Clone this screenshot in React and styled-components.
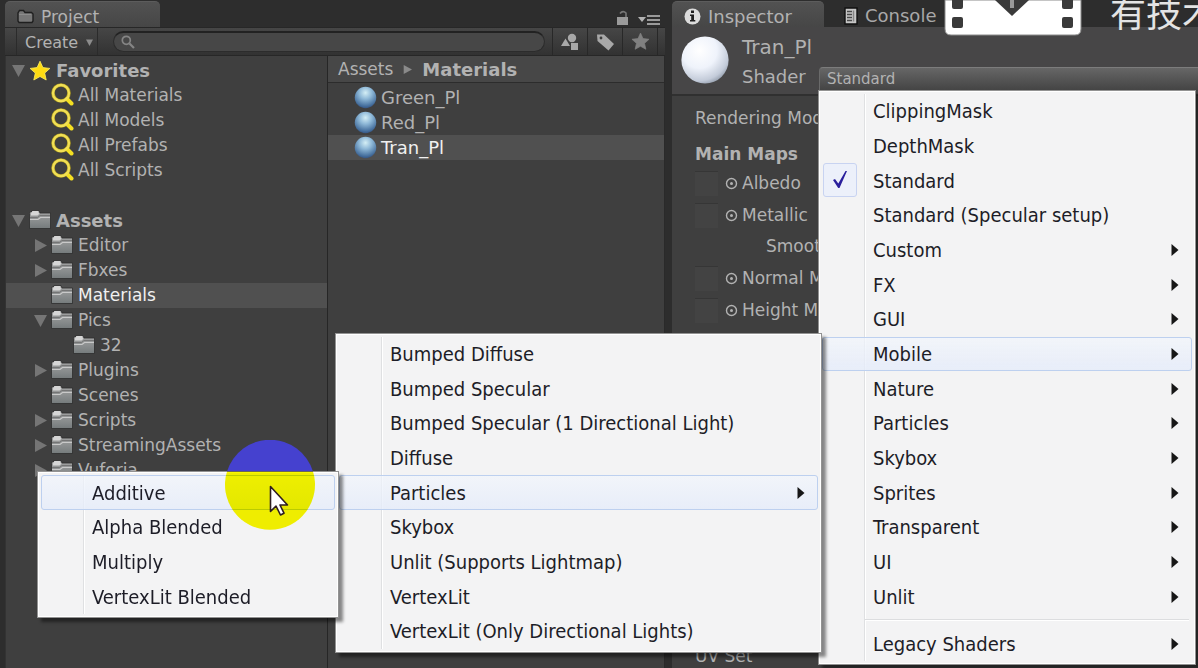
import React from "react";
import styled, { createGlobalStyle, css } from "styled-components";

const Global = createGlobalStyle`
  *, *::before, *::after { box-sizing: border-box; }
  body { margin: 0; background: #2d2d2d; }
  button, input { font: inherit; color: inherit; margin: 0; padding: 0; border: 0; background: none; text-align: left; }
  ul { list-style: none; margin: 0; padding: 0; }
  svg { display: block; flex: none; }
`;

const uiFont = `"DejaVu Sans", Verdana, sans-serif`;
const menuFont = `"DejaVu Sans Condensed", "Segoe UI", sans-serif`;

/* ---------- shell ---------- */
const Editor = styled.div`
  display: grid;
  grid-template-columns: minmax(0, 660fr) minmax(0, 526fr);
  gap: 7px;
  padding-left: 5px;
  min-height: 100vh;
  position: relative;
  overflow: hidden;
  background: #2d2d2d;
  color: #b2b2b2;
  font: 17px/25px ${uiFont};
`;
const Panel = styled.section`
  display: flex;
  flex-direction: column;
  min-width: 0;
`;
const TabBar = styled.div`
  display: flex;
  align-items: stretch;
  height: 27px;
  padding-top: 1px;
`;
const Tab = styled.button`
  display: flex;
  align-items: center;
  gap: 7px;
  width: ${(p) => p.$width}px;
  padding: 4px 0 0 ${(p) => (p.$active ? 12 : 20)}px;
  font-size: ${(p) => (p.$large ? 18 : 17)}px;
  line-height: 20px;
  color: #a8a8a8;
  white-space: nowrap;
  ${(p) =>
    p.$active &&
    css`
      background: linear-gradient(#525252, #464646);
      border-top: 1px solid #5c5c5c;
      border-radius: 5px 5px 0 0;
      color: #b2b2b2;
    `}
`;
const PanelTools = styled.div`
  display: flex;
  align-items: flex-end;
  gap: 8px;
  margin-left: auto;
  padding: 0 4px 1px 0;
`;
const IconButton = styled.button`
  display: flex;
`;

/* ---------- project panel ---------- */
const Toolbar = styled.div`
  display: flex;
  align-items: stretch;
  height: 29px;
  padding-left: 11px;
  background: linear-gradient(#464646, #323232);
  border-top: 1px solid #272727;
  border-bottom: 1px solid #272727;
`;
const CreateButton = styled.button`
  display: flex;
  align-items: center;
  justify-content: space-between;
  width: 82px;
  padding: 2px 4px 0 8px;
  border: solid #2b2b2b;
  border-width: 0 1px;
  font-size: 16px;
`;
const SearchField = styled.label`
  display: flex;
  align-items: center;
  flex: 1;
  min-width: 0;
  margin: 3px 7px 3px 15px;
  padding-left: 7px;
  border-radius: 11px;
  background: #474747;
  border: 1px solid #2c2c2c;
  border-top: 2px solid #222;
  input { flex: 1; min-width: 0; padding-left: 8px; font-size: 15px; outline: 0; }
`;
const FilterButton = styled.button`
  display: flex;
  align-items: center;
  justify-content: center;
  width: 35px;
  border-left: 1px solid #282828;
`;
const ToolbarEnd = styled.span`
  width: 8px;
  border-left: 1px solid #282828;
`;
const Columns = styled.div`
  display: grid;
  grid-template-columns: minmax(0, 323fr) minmax(0, 337fr);
  flex: 1;
  background: #3f3f3f;
`;
const Tree = styled.ul`
  padding-top: 2px;
  border-right: 1px solid #262626;
  border-left: 1px solid #333;
`;
const TreeRow = styled.li`
  display: flex;
  align-items: center;
  height: 25px;
  padding-left: ${(p) => 6 + p.$level * 22}px;
  font-size: ${(p) => (p.$level === 0 ? 18 : 17)}px;
  font-weight: ${(p) => (p.$level === 0 ? 700 : 400)};
  white-space: nowrap;
  ${(p) => p.$selected && css`background: #505050; color: #f0f0f0;`}
`;
const TreeGap = styled.li`
  height: 25px;
`;
const Fold = styled.button`
  width: 17px;
  height: 15px;
`;
const TreeIcon = styled.span`
  width: 27px;
`;
const Listing = styled.div`
  border-right: 1px solid #2a2a2a;
`;
const Breadcrumb = styled.nav`
  display: flex;
  align-items: center;
  gap: 10px;
  height: 27px;
  padding-left: 10px;
  background: #474747;
  border-bottom: 1px solid #2c2c2c;
  margin-bottom: 2px;
  a { color: inherit; text-decoration: none; }
  b { font-size: 18px; }
`;
const AssetRow = styled.li`
  display: flex;
  align-items: center;
  gap: 4px;
  height: 25px;
  padding-left: 26px;
  font-size: 18px;
  ${(p) => p.$selected && css`background: #505050; color: #f0f0f0;`}
`;

/* ---------- inspector ---------- */
const MaterialHeader = styled.div`
  display: flex;
  align-items: flex-start;
  height: 69px;
  padding-left: 9px;
  background: #474647;
  border-bottom: 2px solid #303030;
  > svg { margin-top: 9px; }
`;
const MaterialInfo = styled.div`
  flex: 1;
  min-width: 0;
  padding: 6px 0 0 13px;
`;
const MaterialName = styled.div`
  font-size: 20px;
  line-height: 28px;
`;
const ShaderLine = styled.div`
  display: flex;
  height: 24px;
  margin-top: 5px;
`;
const ShaderLabel = styled.span`
  width: 77px;
  font-size: 18px;
  line-height: 22px;
`;
const ShaderPicker = styled.div`
  position: relative;
  flex: 1;
`;
const ShaderButton = styled.button`
  width: 100%;
  height: 24px;
  padding-left: 7px;
  border-top: 1px solid #7c7c7c;
  border-left: 1px solid #6a6a6a;
  border-radius: 4px 0 0 0;
  background: linear-gradient(#666, #434343);
  font-size: 15px;
  line-height: 19px;
`;
const Properties = styled.div`
  display: flex;
  flex-direction: column;
  flex: 1;
  padding: 10px 0 0 23px;
  background: #3f3f3f;
  white-space: nowrap;
`;
const PropertyLabel = styled.div`
  height: ${(p) => (p.$heading ? 35 : 27)}px;
  line-height: ${(p) => (p.$heading ? 43 : 25)}px;
  font-weight: ${(p) => (p.$heading ? 700 : 400)};
`;
const MapList = styled.ul`
  display: grid;
  grid-auto-rows: 1fr;
  min-height: 158px;
`;
const MapRow = styled.li`
  display: flex;
  align-items: center;
  gap: 4px;
  padding-left: ${(p) => (p.$indent ? 71 : 0)}px;
`;
const TextureSlot = styled.button`
  width: 23px;
  height: 25px;
  margin-right: 3px;
  background: #434343;
  border-top: 1px solid #363636;
`;
const Footer = styled.div`
  margin-top: auto;
  line-height: 23px;
`;

/* ---------- popup menus ---------- */
const Menu = styled.div`
  position: absolute;
  z-index: 2;
  width: ${(p) => p.$width}px;
  padding: 3px;
  border: 1px solid #929292;
  background:
    linear-gradient(90deg, transparent 42px, #dfe0e2 42px, #dfe0e2 43px, #fff 43px, #fff 44px, transparent 44px) content-box,
    #f3f3f4;
  box-shadow: inset 0 0 0 1px #fff, 4px 4px 3px rgba(0, 0, 0, 0.45);
  color: #1d1d27;
  font: 20px/32px ${menuFont};
  ${(p) => (p.$root ? "top: 100%; left: -1px;" : "top: -4px; right: 100%;")}
`;
const MenuGroup = styled.ul`
  display: grid;
  grid-auto-rows: 1fr;
  min-height: ${(p) => p.$height}px;
`;
const MenuItem = styled.li`
  position: relative;
  display: flex;
`;
const MenuButton = styled.button`
  display: flex;
  align-items: center;
  flex: 1;
  padding: 0 12px 0 50px;
  border: 1px solid transparent;
  border-radius: 3px;
  white-space: nowrap;
  ${(p) =>
    p.$active &&
    css`
      border-color: #bdd0ef;
      background: linear-gradient(rgba(241, 245, 252, 0.7), rgba(229, 236, 250, 0.8));
    `}
  svg { margin-left: auto; }
`;
const CheckBadge = styled.span`
  position: absolute;
  left: 1px;
  top: 0;
  display: flex;
  align-items: center;
  justify-content: center;
  width: 34px;
  height: 34px;
  border: 1px solid #c8d3f1;
  border-radius: 3px;
  background: #ecf0fa;
`;
const Separator = styled.hr`
  height: 2px;
  margin: 5px 3px 5px 43px;
  border: 0;
  border-top: 1px solid #dcdddf;
  background: #fff;
`;
const ClickHalo = styled.svg`
  position: absolute;
  left: 184px;
  top: -35px;
  pointer-events: none;
  mix-blend-mode: ${(p) => (p.$blend ? "multiply" : "normal")};
`;
const Pointer = styled.svg`
  position: absolute;
  left: 228px;
  top: 10px;
`;

/* ---------- video overlay ---------- */
const Watermark = styled.div`
  position: absolute;
  top: 0;
  left: 944px;
  display: flex;
  gap: 28px;
  color: #e4e4e4;
  font: 36px/34px "Noto Sans CJK SC", sans-serif;
  white-space: nowrap;
  span { margin-top: -6px; }
`;

/* ---------- drawings ---------- */
const Arrow = ({ down, size = 13, fill = "#757575" }) => (
  <svg width={size} height={size} viewBox="0 0 13 13">
    <path d={down ? "M0 1h13L6.500 13z" : "M1 0v13L13 6.500z"} fill={fill} />
  </svg>
);
const FolderIcon = () => (
  <svg width="22" height="21" viewBox="0 0 22 21">
    <defs>
      <linearGradient id="folder" x1="0" y1="0" x2="0" y2="1">
        <stop offset="0" stopColor="#a6a6a6" />
        <stop offset="1" stopColor="#757b7c" />
      </linearGradient>
    </defs>
    <path d="M.5 3.500Q.5 1.500 2 1.500H3V.5h7l1 2.500h10.500v15.500H.5z" fill="url(#folder)" stroke="#2c2c2c" strokeWidth=".8" />
    <path d="M2 3.500L3.500 1H9l1.200 3-1.700 1.500H2z" fill="#d6d6d6" />
    <path d="M1 9.500h8l2.500-2h9.500" fill="none" stroke="#c9c9c9" strokeWidth="1.200" />
    <path d="M1 7.500h7.500l2.500-2h10" fill="none" stroke="#6c6c6c" strokeWidth=".8" />
  </svg>
);
const StarIcon = ({ size = 22, fill = "#ffdc12", edge = "#ffef60" }) => (
  <svg width={size} height={size} viewBox="0 0 22 22">
    <path d="M11 1.200l2.900 6.400 7 .8-5.200 4.700 1.500 6.900L11 16.500 4.800 20l1.500-6.900L1.100 8.400l7-.8z" fill={fill} stroke={edge} strokeWidth=".8" />
  </svg>
);
const YellowSearch = () => (
  <svg width="23" height="25" viewBox="0 0 23 25" fill="none" strokeLinecap="round">
    <circle cx="10" cy="10" r="8" stroke="#a89620" strokeWidth="3.600" />
    <path d="M16 16l4.500 4.500" stroke="#f4df22" strokeWidth="4" />
    <circle cx="10" cy="10" r="8" stroke="#f1df55" strokeWidth="2.400" />
  </svg>
);
const SmallSearch = () => (
  <svg width="14" height="14" viewBox="0 0 14 14" fill="none" stroke="#858585" strokeWidth="1.700">
    <circle cx="5.300" cy="5.300" r="4" />
    <path d="M8.500 8.500L13 13" strokeWidth="2.200" />
  </svg>
);
const Sphere = ({ size, white }) => (
  <svg width={size} height={size} viewBox="0 0 24 24">
    <defs>
      <radialGradient id={white ? "ballW" : "ballB"} cx={white ? ".38" : ".5"} cy={white ? ".3" : ".28"} r={white ? ".75" : ".72"}>
        <stop offset="0" stopColor={white ? "#ffffff" : "#d4eef5"} />
        <stop offset={white ? ".5" : ".4"} stopColor={white ? "#eff3fb" : "#8fb9d8"} />
        <stop offset=".85" stopColor={white ? "#c3cbd9" : "#47719f"} />
        <stop offset="1" stopColor={white ? "#929cab" : "#355583"} />
      </radialGradient>
    </defs>
    <circle cx="12" cy="12" r={white ? 11.800 : 11.200} fill={`url(#${white ? "ballW" : "ballB"})`} />
  </svg>
);
const TabFolder = () => (
  <svg width="17" height="15" viewBox="0 0 17 15">
    <path d="M1 12V4l1.500-2.500h4L8 3.500h6.500L16 5v7l-1 1.500H2z" fill="#777" stroke="#1f1f1f" strokeWidth="1.400" />
    <path d="M2 5.500h12" stroke="#929292" strokeWidth=".8" />
  </svg>
);
const LockIcon = () => (
  <svg width="14" height="16" viewBox="0 0 14 16">
    <rect x="1" y="7" width="11" height="8" fill="#9a9a9a" />
    <path d="M4 3.500Q7 0 10 3v4" fill="none" stroke="#777" strokeWidth="1.600" />
  </svg>
);
const OptionsIcon = () => (
  <svg width="23" height="12" viewBox="0 0 23 12">
    <path d="M0 3h8L4 8z" fill="#b2b2b2" />
    <path d="M9 2h13M9 6h13M9 10h13" stroke="#9a9a9a" strokeWidth="2.200" />
  </svg>
);
const ShapesIcon = () => (
  <svg width="18" height="18" viewBox="0 0 18 18" fill="#a8a8a8">
    <circle cx="11" cy="5" r="4.200" />
    <path d="M0 13L4.500 5.500 9 13z" />
    <path d="M10 10h7v7h-7z" />
  </svg>
);
const TagIcon = () => (
  <svg width="19" height="18" viewBox="0 0 19 18">
    <path d="M1 1.500h7l10 9.500-5.500 6.500L1.500 8z" fill="#a8a8a8" />
    <circle cx="5" cy="5" r="1.400" fill="#3c3c3c" />
  </svg>
);
const InfoIcon = () => (
  <svg width="17" height="17" viewBox="0 0 17 17">
    <circle cx="8.500" cy="8.500" r="8" fill="#dcdcdc" />
    <path d="M7 2.500h3v2.400H7zM6 6.500h4V12h1.300v1.600H6V12h1.200V8H6z" fill="#1e1e1e" />
  </svg>
);
const ConsoleIcon = () => (
  <svg width="14" height="18" viewBox="0 0 14 18">
    <path d="M1 1h12v16H1z" fill="#c6c6c6" stroke="#111" strokeWidth="1.400" />
    <path d="M3 4.500h5M3 7.500h5M3 10.500h5M3 13.500h5" stroke="#4a4a4a" strokeWidth="1.300" />
    <path d="M9.500 3.500v11" stroke="#858585" strokeWidth="1.500" />
  </svg>
);
const PickerIcon = () => (
  <svg width="13" height="13" viewBox="0 0 13 13">
    <circle cx="6.500" cy="6.500" r="5" fill="none" stroke="#b2b2b2" strokeWidth="1.400" />
    <circle cx="6.500" cy="6.500" r="1.500" fill="#b2b2b2" />
  </svg>
);
const CheckIcon = () => (
  <svg width="18" height="20" viewBox="0 0 18 20">
    <path d="M2 10l2-1 3.300 4.500L14.500 1l1.500 0L8.500 18H7.200z" fill="#2a1f9c" />
  </svg>
);
const SubArrow = () => (
  <svg width="8" height="12" viewBox="0 0 8 12">
    <path d="M0.500 0v12L7.500 6z" fill="#161616" />
  </svg>
);
const FilmIcon = () => (
  <svg width="138" height="36" viewBox="0 0 138 36">
    <path d="M1 0h136v29q0 6-6 6H7q-6 0-6-6z" fill="#fff" stroke="#8b8b8b" />
    <g fill="#3a3a3a">
      <rect x="8" y="-3" width="11" height="12" rx="2" />
      <rect x="8" y="17" width="11" height="11" rx="2" />
      <rect x="118" y="-3" width="11" height="12" rx="2" />
      <rect x="118" y="17" width="11" height="11" rx="2" />
      <path d="M51 0h34L68 16z" />
    </g>
    <path d="M68 0v8" stroke="#999" strokeWidth="4" />
  </svg>
);

/* ---------- content ---------- */
const favorites = ["All Materials", "All Models", "All Prefabs", "All Scripts"];
const folders = [
  { name: "Assets", level: 0, fold: "open" },
  { name: "Editor", level: 1, fold: "closed" },
  { name: "Fbxes", level: 1, fold: "closed" },
  { name: "Materials", level: 1, selected: true },
  { name: "Pics", level: 1, fold: "open" },
  { name: "32", level: 2 },
  { name: "Plugins", level: 1, fold: "closed" },
  { name: "Scenes", level: 1 },
  { name: "Scripts", level: 1, fold: "closed" },
  { name: "StreamingAssets", level: 1, fold: "closed" },
  { name: "Vuforia", level: 1, fold: "closed" },
];
const materials = ["Green_Pl", "Red_Pl", "Tran_Pl"];
const maps = ["Albedo", "Metallic", "Smoothness", "Normal Map", "Height Map"];
const particleShaders = [
  { name: "Additive", active: true, pointer: true },
  { name: "Alpha Blended" },
  { name: "Multiply" },
  { name: "VertexLit Blended" },
];
const mobileShaders = [
  { name: "Bumped Diffuse" },
  { name: "Bumped Specular" },
  { name: "Bumped Specular (1 Directional Light)" },
  { name: "Diffuse" },
  { name: "Particles", more: true, active: true, submenu: { items: particleShaders, width: 302, height: 139 } },
  { name: "Skybox" },
  { name: "Unlit (Supports Lightmap)" },
  { name: "VertexLit" },
  { name: "VertexLit (Only Directional Lights)" },
];
const shaders = [
  { name: "ClippingMask" },
  { name: "DepthMask" },
  { name: "Standard", checked: true },
  { name: "Standard (Specular setup)" },
  { name: "Custom", more: true },
  { name: "FX", more: true },
  { name: "GUI", more: true },
  { name: "Mobile", more: true, active: true, submenu: { items: mobileShaders, width: 487, height: 312 } },
  { name: "Nature", more: true },
  { name: "Particles", more: true },
  { name: "Skybox", more: true },
  { name: "Sprites", more: true },
  { name: "Transparent", more: true },
  { name: "UI", more: true },
  { name: "Unlit", more: true },
];

function MenuItems({ items, height }) {
  return (
    <MenuGroup $height={height}>
      {items.map((item) => (
        <MenuItem key={item.name}>
          <MenuButton $active={item.active}>
            {item.name}
            {item.more && <SubArrow />}
          </MenuButton>
          {item.checked && <CheckBadge><CheckIcon /></CheckBadge>}
          {item.submenu && (
            <Menu $width={item.submenu.width}>
              <MenuItems items={item.submenu.items} height={item.submenu.height} />
            </Menu>
          )}
          {item.pointer && <ClickPointer />}
        </MenuItem>
      ))}
    </MenuGroup>
  );
}

function ClickPointer() {
  return (
    <>
      <ClickHalo width="90" height="91" viewBox="0 0 90 91">
        <path d="M2 31.500A45 45 0 0 1 88 31.500z" fill="#4541cf" />
      </ClickHalo>
      <ClickHalo $blend width="90" height="91" viewBox="0 0 90 91">
        <path d="M2 31.500A45 45 0 1 0 88 31.500z" fill="#fbf900" />
      </ClickHalo>
      <Pointer width="20" height="32" viewBox="0 0 20 32">
        <path d="M1.500 1.500v25l5.500-5.500 4.500 9 3.500-1.800-4-8.200h7.500z" fill="#fff" stroke="#2e1e20" strokeWidth="1.600" strokeLinejoin="round" />
      </Pointer>
    </>
  );
}

function ProjectPanel() {
  return (
    <Panel>
      <TabBar>
        <Tab $active $width={155}><TabFolder />Project</Tab>
        <PanelTools>
          <IconButton aria-label="Lock"><LockIcon /></IconButton>
          <IconButton aria-label="Options"><OptionsIcon /></IconButton>
        </PanelTools>
      </TabBar>
      <Toolbar>
        <CreateButton>Create<Arrow down size={7} fill="#8c8c8c" /></CreateButton>
        <SearchField>
          <SmallSearch />
          <input type="text" aria-label="Search assets" />
        </SearchField>
        <FilterButton aria-label="Filter by type"><ShapesIcon /></FilterButton>
        <FilterButton aria-label="Filter by label"><TagIcon /></FilterButton>
        <FilterButton aria-label="Save search"><StarIcon size={19} fill="#808080" edge="#808080" /></FilterButton>
        <ToolbarEnd />
      </Toolbar>
      <Columns>
        <Tree>
          <TreeRow $level={0}>
            <Fold aria-label="Collapse Favorites"><Arrow down /></Fold>
            <TreeIcon><StarIcon /></TreeIcon>Favorites
          </TreeRow>
          {favorites.map((name) => (
            <TreeRow key={name} $level={1}>
              <Fold as="span" />
              <TreeIcon><YellowSearch /></TreeIcon>{name}
            </TreeRow>
          ))}
          <TreeGap />
          {folders.map((f) => (
            <TreeRow key={f.name} $level={f.level} $selected={f.selected}>
              {f.fold ? <Fold aria-label={`Toggle ${f.name}`}><Arrow down={f.fold === "open"} /></Fold> : <Fold as="span" />}
              <TreeIcon><FolderIcon /></TreeIcon>{f.name}
            </TreeRow>
          ))}
        </Tree>
        <Listing>
          <Breadcrumb>
            <a href="#assets">Assets</a>
            <Arrow size={9} fill="#8a8a8a" />
            <b>Materials</b>
          </Breadcrumb>
          <ul>
            {materials.map((name) => (
              <AssetRow key={name} $selected={name === "Tran_Pl"}><Sphere size={23} />{name}</AssetRow>
            ))}
          </ul>
        </Listing>
      </Columns>
    </Panel>
  );
}

function InspectorPanel() {
  return (
    <Panel>
      <TabBar>
        <Tab $active $large $width={152}><InfoIcon />Inspector</Tab>
        <Tab $large $width={130}><ConsoleIcon />Console</Tab>
      </TabBar>
      <MaterialHeader>
        <Sphere size={48} white />
        <MaterialInfo>
          <MaterialName>Tran_Pl</MaterialName>
          <ShaderLine>
            <ShaderLabel>Shader</ShaderLabel>
            <ShaderPicker>
              <ShaderButton aria-haspopup="menu">Standard</ShaderButton>
              <Menu $root $width={378}>
                <MenuItems items={shaders} height={520} />
                <Separator />
                <MenuItems items={[{ name: "Legacy Shaders", more: true }]} height={35} />
              </Menu>
            </ShaderPicker>
          </ShaderLine>
        </MaterialInfo>
      </MaterialHeader>
      <Properties>
        <PropertyLabel>Rendering Mode</PropertyLabel>
        <PropertyLabel $heading>Main Maps</PropertyLabel>
        <MapList>
          {maps.map((name) => (
            <MapRow key={name} $indent={name === "Smoothness"}>
              {name !== "Smoothness" && <><TextureSlot aria-label={`${name} texture`} /><PickerIcon /></>}
              {name}
            </MapRow>
          ))}
        </MapList>
        <Footer>UV Set</Footer>
      </Properties>
    </Panel>
  );
}

export default function App() {
  return (
    <>
      <Global />
      <Editor>
        <ProjectPanel />
        <InspectorPanel />
        <Watermark><FilmIcon /><span>有技术</span></Watermark>
      </Editor>
    </>
  );
}
